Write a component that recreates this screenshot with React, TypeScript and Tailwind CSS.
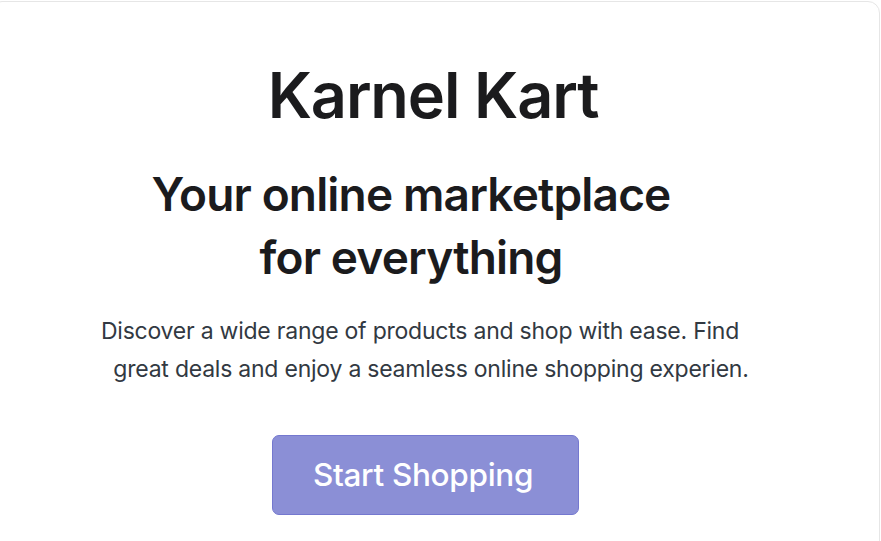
export default function App() {
  return (
    <div className="h-[541px] w-full overflow-hidden bg-white font-['Inter',sans-serif]">
      <div className="ml-[-10px] mr-[1px] mt-[1px] h-[620px] rounded-[12px] border border-[#e6e6e6] bg-white">
        <div className="flex flex-col items-center pt-[57px]">
          {/* Brand */}
          <h1 className="pr-[4px] text-[63px] font-semibold leading-[72px] tracking-[-0.018em] text-[#1b1b1d]">
            Karnel Kart
          </h1>

          {/* Tagline */}
          <h2 className="mt-[32px] pr-[48px] text-center text-[46px] font-semibold leading-[63px] tracking-[-0.018em] text-[#1b1b1d]">
            Your online marketplace
            <br />
            for everything
          </h2>

          {/* Description */}
          <p className="mt-[23px] text-center text-[23px] leading-[38px] tracking-[-0.01em] text-[#323942]">
            <span className="block pr-[30px]">
              Discover a wide range of products and shop with ease. Find
            </span>
            <span className="block pr-[8px]">
              great deals and enjoy a seamless online shopping experien.
            </span>
          </p>

          <button className="mr-[20px] mt-[47px] h-[80px] w-[307px] rounded-[7px] border border-[#7478cf] bg-[#8b8fd6] pr-[4px] text-[31.5px] font-medium tracking-[-0.01em] text-white">
            Start Shopping
          </button>
        </div>
      </div>
    </div>
  );
}
